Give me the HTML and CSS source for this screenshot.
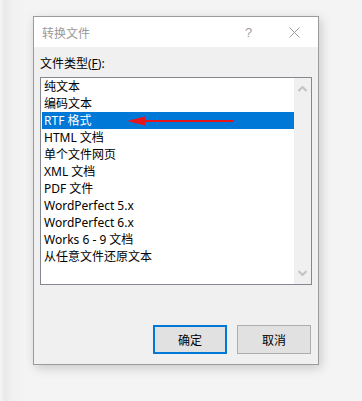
FILE: index.html
```html
<!DOCTYPE html>
<html lang="zh-CN">
<head>
    <meta charset="UTF-8">
    <meta name="viewport" content="width=device-width, initial-scale=1.0">
    <title>转换文件</title>
    <link rel="stylesheet" href="styles.css">
</head>
<body>
    <div class="dialog">
        <div class="titlebar">
            <span class="title">转换文件</span>
            <span class="help">?</span>
            <span class="close">
                <svg width="11" height="11" viewBox="0 0 11 11"><path d="M0.5 0.5L10.5 10.5M10.5 0.5L0.5 10.5" stroke="#9a9a9a" stroke-width="1" fill="none"/></svg>
            </span>
        </div>

        <div class="content">
            <div class="label">文件类型(<u>F</u>):</div>

            <div class="listbox">
                <ul class="items">
                    <li>纯文本</li>
                    <li>编码文本</li>
                    <li class="selected">RTF 格式</li>
                    <li>HTML 文档</li>
                    <li>单个文件网页</li>
                    <li>XML 文档</li>
                    <li>PDF 文件</li>
                    <li>WordPerfect 5.x</li>
                    <li>WordPerfect 6.x</li>
                    <li>Works 6 - 9 文档</li>
                    <li>从任意文件还原文本</li>
                </ul>
                <div class="scrollbar">
                    <svg width="9" height="6" viewBox="0 0 9 6"><path d="M0.5 5L4.5 1L8.5 5" stroke="#c2c2c2" stroke-width="2" fill="none"/></svg>
                    <svg width="9" height="6" viewBox="0 0 9 6"><path d="M0.5 1L4.5 5L8.5 1" stroke="#c2c2c2" stroke-width="2" fill="none"/></svg>
                </div>
                <!-- annotation arrow drawn over the list -->
                <svg class="arrow" width="108" height="12" viewBox="0 0 108 12">
                    <path d="M0 6L18 1.5L18 10.5Z" fill="#e8141b"/>
                    <line x1="16" y1="6" x2="107" y2="6" stroke="#e8141b" stroke-width="2"/>
                </svg>
            </div>

            <div class="buttons">
                <button class="btn default">确定</button>
                <button class="btn">取消</button>
            </div>
        </div>
    </div>
</body>
</html>
```

FILE: styles.css
```css
body {
    margin: 0;
    height: 401px;
    background: linear-gradient(to right, #f6f6f6 0, #e9e9e9 5px, #f1f1f1 12px, #f4f4f4 24px);
    font-family: "Noto Sans", "Noto Sans CJK SC", sans-serif;
    font-size: 12px;
    color: #000;
    overflow: hidden;
}

.dialog {
    position: relative;
    margin: 16px 0 0 33px;
    width: 284px;
    height: 347px;
    border: 1px solid #9b9b9b;
    background-color: #f0f0f0;
    box-shadow: 2px 3px 10px rgba(0, 0, 0, 0.18);
}

.titlebar {
    height: 30px;
    background-color: #fff;
    display: flex;
    align-items: center;
    padding-left: 8px;
    color: #999;
}
.title {
    flex: 1;
    font-size: 12px;
    padding-top: 1px;
}
.help {
    width: 14px;
    font-family: "Liberation Sans", sans-serif;
    font-size: 13px;
    margin-right: 30px;
    color: #a0a0a0;
}
.close {
    width: 11px;
    height: 11px;
    margin-right: 18px;
    display: flex;
}

.content {
    padding: 8px 6px 0 6px;
}

.label {
    height: 17px;
    line-height: 17px;
    margin-bottom: 5px;
}

.listbox {
    position: relative;
    display: flex;
    height: 206px;
    border: 1px solid #828790;
    background-color: #fff;
}
.items {
    flex: 1;
    list-style: none;
    margin: 0;
    padding: 0 0 0 1px;
}
.items li {
    height: 17px;
    line-height: 17px;
    padding-left: 2px;
    white-space: nowrap;
}
.items li.selected {
    background-color: #0078d7;
    color: #fff;
}
.scrollbar {
    width: 17px;
    background-color: #f0f0f0;
    display: flex;
    flex-direction: column;
    justify-content: space-between;
    align-items: center;
    padding: 8px 0 8px;
}
.arrow {
    position: absolute;
    left: 86px;
    top: 37px;
}

.buttons {
    display: flex;
    justify-content: flex-end;
    gap: 10px;
    margin-top: 40px;
    padding-right: 1px;
}
.btn {
    width: 74px;
    height: 29px;
    background-color: #e1e1e1;
    border: 1px solid #adadad;
    font-family: "Noto Sans CJK SC", sans-serif;
    font-size: 12px;
    color: #000;
    padding: 0;
}
.btn.default {
    border: 2px solid #0078d7;
}
```
